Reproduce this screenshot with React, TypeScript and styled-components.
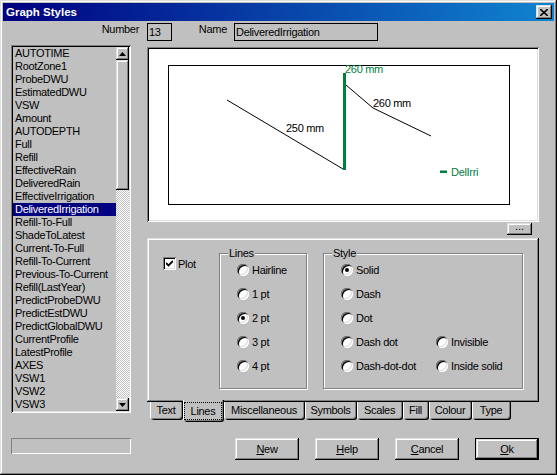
import React from 'react';
import styled, { createGlobalStyle } from 'styled-components';

const GlobalStyle = createGlobalStyle`
	html, body {
		margin: 0;
		padding: 0;
		background: #c0c0c0;
	}
	body {
		font-family: 'Liberation Sans', Arial, sans-serif;
		font-size: 11px;
		letter-spacing: -0.3px;
		color: #000;
	}
`;

const raised = `
	box-shadow: inset -1px -1px 0 #000, inset 1px 1px 0 #dfdfdf, inset -2px -2px 0 #808080,
		inset 2px 2px 0 #fff;
`;

const sunken = `
	box-shadow: inset 1px 1px 0 #808080, inset -1px -1px 0 #fff, inset 2px 2px 0 #000,
		inset -2px -2px 0 #dfdfdf;
`;

const Window = styled.div`
	width: 557px;
	height: 475px;
	box-sizing: border-box;
	padding: 3px;
	background: #c0c0c0;
	box-shadow: inset -1px -1px 0 #000, inset 1px 1px 0 #dfdfdf, inset -2px -2px 0 #808080,
		inset 2px 2px 0 #fff;
	display: flex;
	flex-direction: column;
`;

const TitleBar = styled.div`
	height: 18px;
	display: flex;
	align-items: center;
	justify-content: space-between;
	padding: 0 2px 0 3px;
	background: linear-gradient(90deg, #000080, #1084d0);
	color: #fff;
`;

const TitleText = styled.span`
	font-weight: bold;
	font-size: 11.5px;
	letter-spacing: 0;
`;

const CloseButton = styled.div`
	width: 16px;
	height: 14px;
	background: #c0c0c0;
	${raised}
	display: flex;
	align-items: center;
	justify-content: center;
`;

const Body = styled.div`
	display: flex;
	flex-direction: column;
	padding-left: 8px;
`;

const HeaderRow = styled.div`
	display: flex;
	align-items: flex-start;
	height: 18px;
	margin-top: 2px;
`;

const FieldLabel = styled.span<{ $width: number; $gap: number }>`
	width: ${(p) => p.$width}px;
	text-align: right;
	line-height: 13px;
	margin-right: ${(p) => p.$gap}px;
`;

const Field = styled.div<{ $width: number }>`
	width: ${(p) => p.$width}px;
	height: 18px;
	box-sizing: border-box;
	border: 1px solid #000;
	padding: 1px 1px 0;
	line-height: 14px;
`;

const MainRow = styled.div`
	display: flex;
	gap: 16px;
	margin-top: 4px;
`;

const LeftColumn = styled.div`
	width: 120px;
	display: flex;
	flex-direction: column;
`;

const ListBox = styled.div`
	height: 368px;
	box-sizing: border-box;
	padding: 2px;
	${sunken}
	display: flex;
`;

const ListItems = styled.div`
	flex: 1;
	overflow: hidden;
`;

const ListItem = styled.div<{ $selected: boolean }>`
	height: 13px;
	line-height: 13px;
	padding-left: 2px;
	white-space: nowrap;
	background: ${(p) => (p.$selected ? '#000080' : 'transparent')};
	color: ${(p) => (p.$selected ? '#fff' : '#000')};
`;

const ScrollBar = styled.div`
	width: 13px;
	display: flex;
	flex-direction: column;
`;

const ScrollButton = styled.div`
	height: 13px;
	background: #c0c0c0;
	${raised}
	display: flex;
	align-items: center;
	justify-content: center;
`;

const ScrollThumb = styled.div`
	height: 130px;
	background: #c0c0c0;
	${raised}
`;

const ScrollTrack = styled.div`
	flex: 1;
	background-image: repeating-conic-gradient(#fff 0 25%, #c0c0c0 0 50%);
	background-size: 2px 2px;
`;

const StatusBox = styled.div`
	margin-top: 25px;
	height: 16px;
	box-shadow: inset 1px 1px 0 #808080, inset -1px -1px 0 #fff;
`;

const RightColumn = styled.div`
	width: 392px;
	display: flex;
	flex-direction: column;
	padding-top: 2px;
`;

const Preview = styled.div`
	height: 175px;
	box-sizing: border-box;
	padding: 2px;
	background: #fff;
	${sunken}
`;

const ChartSvg = styled.svg`
	display: block;
	font-family: 'Liberation Sans', Arial, sans-serif;
	font-size: 11px;
	letter-spacing: -0.3px;
`;

const DotsRow = styled.div`
	display: flex;
	justify-content: flex-end;
	padding-right: 7px;
	margin-top: 1px;
`;

const DotsButton = styled.div`
	width: 25px;
	height: 12px;
	background: #c0c0c0;
	${raised}
	font-size: 11px;
	line-height: 6px;
	text-align: center;
	letter-spacing: 0;
`;

const TabPanel = styled.div`
	margin-top: 3px;
	height: 164px;
	box-sizing: border-box;
	padding: 15px 0 0 16px;
	background: #c0c0c0;
	${raised}
	display: flex;
	align-items: flex-start;
`;

const PlotArea = styled.label`
	width: 56px;
	display: flex;
	align-items: center;
	gap: 2px;
	margin-top: 4px;
`;

const CheckBox = styled.span`
	width: 13px;
	height: 13px;
	background: #fff;
	${sunken}
	display: flex;
	align-items: center;
	justify-content: center;
`;

const GroupBox = styled.div<{ $width: number; $gap?: number }>`
	position: relative;
	width: ${(p) => p.$width}px;
	height: 136px;
	box-sizing: border-box;
	margin-left: ${(p) => p.$gap ?? 0}px;
	border: 1px solid #808080;
	box-shadow: inset 1px 1px 0 #fff, 1px 1px 0 #fff;
	padding: 4px 0 0 17px;
`;

const GroupLegend = styled.span`
	position: absolute;
	top: -7px;
	left: 8px;
	padding: 0 1px;
	background: #c0c0c0;
	line-height: 13px;
`;

const RadioGrid = styled.div<{ $columns: string }>`
	display: grid;
	grid-template-columns: ${(p) => p.$columns};
	grid-auto-rows: 24px;
`;

const RadioOption = styled.div<{ $col: number; $row: number }>`
	grid-column: ${(p) => p.$col};
	grid-row: ${(p) => p.$row};
	display: flex;
	align-items: center;
	gap: 3px;
	white-space: nowrap;
`;

const RadioCircle = styled.span<{ $checked: boolean }>`
	width: 12px;
	height: 12px;
	border-radius: 50%;
	background: #fff;
	box-shadow: inset 1px 1px 0 #808080, inset -1px -1px 0 #fff, inset 2px 2px 0 #000,
		inset -2px -2px 0 #dfdfdf;
	display: flex;
	align-items: center;
	justify-content: center;

	&::after {
		content: '';
		width: 4px;
		height: 4px;
		border-radius: 50%;
		background: ${(p) => (p.$checked ? '#000' : 'transparent')};
	}
`;

const TabStrip = styled.div`
	display: flex;
	align-items: flex-start;
	padding-left: 3px;
	height: 20px;
`;

const Tab = styled.div<{ $width: number; $active?: boolean }>`
	position: relative;
	z-index: ${(p) => (p.$active ? 1 : 0)};
	width: ${(p) => p.$width}px;
	height: ${(p) => (p.$active ? 22 : 18)}px;
	margin-top: ${(p) => (p.$active ? -2 : 0)}px;
	box-sizing: border-box;
	padding: ${(p) => (p.$active ? '2px 2px 2px 1px' : '0 1px 0 0')};
	background: #c0c0c0;
	border-radius: 0 0 3px 3px;
	box-shadow: inset 1px 0 0 #fff, inset -1px -1px 0 #000, inset -2px -2px 0 #808080;
	line-height: 17px;
	white-space: nowrap;
	display: flex;
	align-items: stretch;
	justify-content: center;
`;

const TabFocus = styled.span`
	flex: 1;
	text-align: center;
	outline: 1px dotted #000;
	outline-offset: -1px;
	line-height: 19px;
`;

const ButtonRow = styled.div`
	display: flex;
	justify-content: flex-end;
	gap: 16px;
	margin-top: 16px;
`;

const PushButton = styled.div<{ $default?: boolean }>`
	width: 64px;
	height: 22px;
	box-sizing: border-box;
	background: #c0c0c0;
	border: ${(p) => (p.$default ? '1px solid #000' : 'none')};
	${raised}
	display: flex;
	align-items: center;
	justify-content: center;
`;

const ITEMS = [
	'AUTOTIME',
	'RootZone1',
	'ProbeDWU',
	'EstimatedDWU',
	'VSW',
	'Amount',
	'AUTODEPTH',
	'Full',
	'Refill',
	'EffectiveRain',
	'DeliveredRain',
	'EffectiveIrrigation',
	'DeliveredIrrigation',
	'Refill-To-Full',
	'ShadeToLatest',
	'Current-To-Full',
	'Refill-To-Current',
	'Previous-To-Current',
	'Refill(LastYear)',
	'PredictProbeDWU',
	'PredictEstDWU',
	'PredictGlobalDWU',
	'CurrentProfile',
	'LatestProfile',
	'AXES',
	'VSW1',
	'VSW2',
	'VSW3'
];

const LINE_WIDTHS = ['Hairline', '1 pt', '2 pt', '3 pt', '4 pt'];

const STYLES = [
	{ label: 'Solid', col: 1, row: 1 },
	{ label: 'Dash', col: 1, row: 2 },
	{ label: 'Dot', col: 1, row: 3 },
	{ label: 'Dash dot', col: 1, row: 4 },
	{ label: 'Dash-dot-dot', col: 1, row: 5 },
	{ label: 'Invisible', col: 2, row: 4 },
	{ label: 'Inside solid', col: 2, row: 5 }
];

const TABS = [
	{ label: 'Text', width: 33 },
	{ label: 'Lines', width: 41 },
	{ label: 'Miscellaneous', width: 81 },
	{ label: 'Symbols', width: 52 },
	{ label: 'Scales', width: 46 },
	{ label: 'Fill', width: 26 },
	{ label: 'Colour', width: 43 },
	{ label: 'Type', width: 39 }
];

const BUTTONS = [
	{ key: 'N', rest: 'ew' },
	{ key: 'H', rest: 'elp' },
	{ key: 'C', rest: 'ancel' },
	{ key: 'O', rest: 'k', isDefault: true }
];

const GREEN = '#008040';

const Arrow: React.FC<{ up?: boolean }> = ({ up }) => (
	<svg width="7" height="4" viewBox="0 0 7 4">
		<polygon points={up ? '3.5,0 7,4 0,4' : '0,0 7,0 3.5,4'} fill="#000" />
	</svg>
);

const App: React.FC = () => {
	return (
		<>
			<GlobalStyle />
			<Window>
				<TitleBar>
					<TitleText>Graph Styles</TitleText>
					<CloseButton>
						<svg width="8" height="7" viewBox="0 0 8 7">
							<path d="M0 0 L8 7 M8 0 L0 7" stroke="#000" strokeWidth="1.6" />
						</svg>
					</CloseButton>
				</TitleBar>

				<Body>
					<HeaderRow>
						<FieldLabel $width={128} $gap={8}>
							Number
						</FieldLabel>
						<Field $width={25}>13</Field>
						<FieldLabel $width={55} $gap={7}>
							Name
						</FieldLabel>
						<Field $width={144}>DeliveredIrrigation</Field>
					</HeaderRow>

					<MainRow>
						<LeftColumn>
							<ListBox>
								<ListItems>
									{ITEMS.map((item, i) => (
										<ListItem key={item} $selected={i === 12}>
											{item}
										</ListItem>
									))}
								</ListItems>
								<ScrollBar>
									<ScrollButton>
										<Arrow up />
									</ScrollButton>
									<ScrollThumb />
									<ScrollTrack />
									<ScrollButton>
										<Arrow />
									</ScrollButton>
								</ScrollBar>
							</ListBox>
							<StatusBox />
						</LeftColumn>

						<RightColumn>
							<Preview>
								<ChartSvg width="388" height="171" viewBox="2 2 388 171">
									<rect x="21.5" y="18.5" width="341" height="139" fill="none" stroke="#000" />
									<line x1="80" y1="53" x2="196" y2="122" stroke="#000" />
									<rect x="196" y="26" width="3" height="97" fill={GREEN} />
									<polyline points="199,38 226,61 284,89" fill="none" stroke="#000" />
									<text x="198" y="26" fill={GREEN}>
										260 mm
									</text>
									<text x="226" y="60" fill="#000">
										260 mm
									</text>
									<text x="139" y="85" fill="#000">
										250 mm
									</text>
									<rect x="293" y="123.5" width="7" height="2.5" fill={GREEN} />
									<text x="304" y="129" fill={GREEN}>
										DelIrri
									</text>
								</ChartSvg>
							</Preview>

							<DotsRow>
								<DotsButton>...</DotsButton>
							</DotsRow>

							<TabPanel>
								<PlotArea>
									<CheckBox>
										<svg width="7" height="7" viewBox="0 0 7 7">
											<path d="M0 3 L2.5 5.5 L7 1" fill="none" stroke="#000" strokeWidth="1.8" />
										</svg>
									</CheckBox>
									Plot
								</PlotArea>

								<GroupBox $width={88}>
									<GroupLegend>Lines</GroupLegend>
									<RadioGrid $columns="auto">
										{LINE_WIDTHS.map((w, i) => (
											<RadioOption key={w} $col={1} $row={i + 1}>
												<RadioCircle $checked={w === '2 pt'} />
												{w}
											</RadioOption>
										))}
									</RadioGrid>
								</GroupBox>

								<GroupBox $width={200} $gap={16}>
									<GroupLegend>Style</GroupLegend>
									<RadioGrid $columns="95px auto">
										{STYLES.map((s) => (
											<RadioOption key={s.label} $col={s.col} $row={s.row}>
												<RadioCircle $checked={s.label === 'Solid'} />
												{s.label}
											</RadioOption>
										))}
									</RadioGrid>
								</GroupBox>
							</TabPanel>

							<TabStrip>
								{TABS.map((t) =>
									t.label === 'Lines' ? (
										<Tab key={t.label} $width={t.width} $active>
											<TabFocus>{t.label}</TabFocus>
										</Tab>
									) : (
										<Tab key={t.label} $width={t.width}>
											{t.label}
										</Tab>
									)
								)}
							</TabStrip>

							<ButtonRow>
								{BUTTONS.map((b) => (
									<PushButton key={b.key} $default={b.isDefault}>
										<span>
											<u>{b.key}</u>
											{b.rest}
										</span>
									</PushButton>
								))}
							</ButtonRow>
						</RightColumn>
					</MainRow>
				</Body>
			</Window>
		</>
	);
};

export default App;
